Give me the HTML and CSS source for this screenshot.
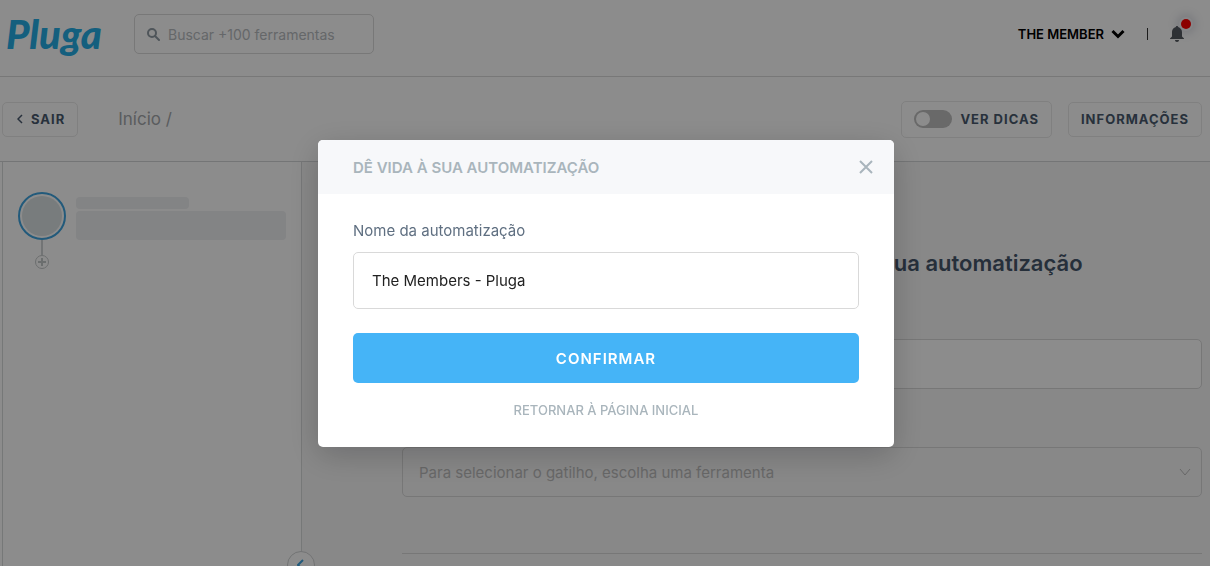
FILE: index.html
```html
<!DOCTYPE html>
<html lang="pt-BR">
<head>
    <meta charset="UTF-8">
    <meta name="viewport" content="width=device-width, initial-scale=1">
    <title>Pluga</title>
    <link rel="stylesheet" href="styles.css">
</head>
<body>
<header class="header">
    <a class="logo" href="#">Pluga</a>
    <label class="search">
        <svg width="13" height="13" viewBox="0 0 13 13" fill="none" stroke="currentColor" stroke-width="2">
            <circle cx="5" cy="5" r="4"/>
            <path d="M8 8l4 4" stroke-linecap="round"/>
        </svg>
        <input type="search" placeholder="Buscar +100 ferramentas" aria-label="Buscar ferramentas">
    </label>
    <div class="account">
        <button class="user" type="button">
            THE MEMBER
            <svg width="14" height="10" viewBox="0 0 14 10" fill="none" stroke="currentColor" stroke-width="3">
                <path d="M1.500 2L7 7.500 12.500 2"/>
            </svg>
        </button>
        <span class="divider"></span>
        <button class="bell" type="button" aria-label="Notificações">
            <svg width="14" height="16" viewBox="0 0 14 16" fill="currentColor">
                <path d="M7 0c.7 0 1.100.4 1.100 1C10.500 1.500 12 3.500 12 6v4.500l2 2V13H0v-.5l2-2V6c0-2.500 1.500-4.500 3.900-5C5.900.4 6.300 0 7 0z"/>
                <path d="M5 14h4c0 1.100-.8 2-2 2s-2-.9-2-2z"/>
            </svg>
            <span class="dot"></span>
        </button>
    </div>
</header>

<nav class="toolbar">
    <button class="btn" type="button">
        <svg width="6" height="10" viewBox="0 0 6 10" fill="none" stroke="currentColor" stroke-width="1.500">
            <path d="M5 1L1 5l4 4"/>
        </svg>
        SAIR
    </button>
    <a class="crumb" href="#">Início /</a>
    <div class="tools">
        <label class="btn tips">
            <input class="switch" type="checkbox" role="switch">
            VER DICAS
        </label>
        <button class="btn" type="button">INFORMAÇÕES</button>
    </div>
</nav>

<div class="workspace">
    <aside class="sidebar">
        <div class="step">
            <div class="avatar"></div>
            <div class="lines">
                <div class="line-short"></div>
                <div class="line-long"></div>
            </div>
        </div>
        <div class="add-step">
            <span class="stem"></span>
            <button class="add" type="button" aria-label="Adicionar etapa">
                <svg width="14" height="14" viewBox="0 0 14 14" fill="none" stroke="currentColor">
                    <circle cx="7" cy="7" r="6.500"/>
                    <path d="M7 3v8M3 7h8" stroke-width="2"/>
                </svg>
            </button>
        </div>
        <button class="collapse" type="button" aria-label="Recolher">
            <svg width="8" height="12" viewBox="0 0 8 12" fill="none" stroke="currentColor" stroke-width="2">
                <path d="M6 1L1 6l5 5"/>
            </svg>
        </button>
    </aside>
    <main class="content">
        <h1>Defina agora como vai começar a sua automatização</h1>
        <label class="label" for="tool">Ferramenta</label>
        <input class="field" id="tool" type="text">
        <label class="label" for="trigger">Gatilho</label>
        <div class="select">
            <select class="field" id="trigger">
                <option>Para selecionar o gatilho, escolha uma ferramenta</option>
            </select>
            <svg width="12" height="8" viewBox="0 0 12 8" fill="none" stroke="currentColor">
                <path d="M1 1l5 6 5-6"/>
            </svg>
        </div>
        <hr>
    </main>
</div>

<div class="overlay">
    <form class="modal" role="dialog" aria-labelledby="modal-title">
        <div class="modal-head">
            <h2 id="modal-title">DÊ VIDA À SUA AUTOMATIZAÇÃO</h2>
            <button class="close" type="button" aria-label="Fechar">
                <svg width="14" height="14" viewBox="0 0 14 14" fill="none" stroke="currentColor" stroke-width="2">
                    <path d="M1 1l12 12M13 1L1 13"/>
                </svg>
            </button>
        </div>
        <div class="modal-body">
            <label for="name">Nome da automatização</label>
            <input id="name" type="text" value="The Members - Pluga">
            <button class="confirm" type="button">CONFIRMAR</button>
            <a class="back" href="#">RETORNAR À PÁGINA INICIAL</a>
        </div>
    </form>
</div>
</body>
</html>
```
FILE: styles.css
```css
* {
    box-sizing: border-box;
}

body {
    margin: 0;
    height: 100vh;
    overflow: hidden;
    display: flex;
    flex-direction: column;
    background: #fff;
    color: #495a6e;
    font-family: Inter, "Liberation Sans", sans-serif;
    font-size: 15px;
}

button, input, select {
    font: inherit;
    color: inherit;
}

button {
    padding: 0;
    border: 0;
    background: none;
    cursor: pointer;
}

a {
    color: inherit;
    text-decoration: none;
}

svg {
    display: block;
    flex: none;
}

/* header */
.header {
    display: flex;
    align-items: center;
    flex: none;
    height: 77px;
    padding: 0 26px 8px 6px;
    border-bottom: 1px solid #dadada;
}

.logo {
    width: 128px;
    color: #26aee6;
    font-family: Lato, sans-serif;
    font-size: 40px;
    font-style: italic;
    font-weight: 900;
    line-height: 48px;
}

.search {
    display: flex;
    align-items: center;
    gap: 8px;
    width: 240px;
    height: 40px;
    padding: 0 12px;
    border: 1px solid #dadada;
    border-radius: 5px;
    color: #a9b5bc;
}

.search svg {
    color: #909ba4;
}

.search input {
    flex: 1;
    min-width: 0;
    padding: 0;
    border: 0;
    outline: 0;
    background: none;
    font-size: 14px;
}

.search input::placeholder {
    color: #b8bcbf;
}

.account {
    display: flex;
    align-items: center;
    margin-left: auto;
    color: #000;
}

.user {
    display: flex;
    align-items: center;
    gap: 7px;
    font-size: 13px;
    font-weight: 600;
}

.divider {
    width: 1px;
    height: 12px;
    margin: 0 22px;
    background: #333;
}

.bell {
    position: relative;
    color: #555a60;
}

.dot {
    position: absolute;
    top: -7px;
    right: -7px;
    width: 10px;
    height: 10px;
    border-radius: 50%;
    background: #ff0000;
    box-shadow: 0 0 0 2px #f4f4f8, 0 0 8px 5px rgba(90, 100, 130, .2);
}

/* toolbar */
.toolbar {
    display: flex;
    align-items: center;
    flex: none;
    height: 85px;
    padding: 0 8px 0 2px;
    border-bottom: 1px solid #d4d6d8;
}

.btn {
    display: flex;
    align-items: center;
    gap: 8px;
    height: 35px;
    padding: 0 12px;
    border: 1px solid #eaeaea;
    border-radius: 5px;
    font-size: 13px;
    font-weight: 700;
    letter-spacing: 1px;
}

.toolbar > .btn {
    padding: 0 12px 0 14px;
}

.crumb {
    margin-left: 40px;
    color: #a4a8ac;
    font-size: 17px;
}

.tools {
    display: flex;
    align-items: center;
    gap: 16px;
    margin-left: auto;
}

.tips {
    height: 37px;
}

.switch {
    appearance: none;
    display: flex;
    width: 38px;
    height: 18px;
    margin: 0;
    padding: 2px;
    border-radius: 9px;
    background: #bfbfbf;
}

.switch::before {
    content: "";
    width: 14px;
    height: 14px;
    border-radius: 50%;
    background: #fff;
}

.switch:checked {
    justify-content: flex-end;
}

/* workspace */
.workspace {
    display: flex;
    flex: 1;
    margin-left: 2px;
}

.sidebar {
    position: relative;
    width: 300px;
    flex: none;
    padding: 30px 15px;
    border: solid #d8dadb;
    border-width: 0 1px;
}

.step {
    display: flex;
    gap: 10px;
}

.avatar {
    width: 48px;
    height: 48px;
    flex: none;
    padding: 2px;
    border: 2px solid #3fa5e0;
    border-radius: 50%;
    background: #dbe2e3 content-box;
}

.lines {
    flex: 1;
    padding-top: 5px;
}

.line-short, .line-long {
    border-radius: 4px;
    background: #eff0f3;
}

.line-short {
    width: 54%;
    height: 12px;
}

.line-long {
    height: 29px;
    margin-top: 2px;
}

.add-step {
    display: flex;
    flex-direction: column;
    align-items: center;
    width: 48px;
    color: #c4c8c9;
}

.stem {
    width: 2px;
    height: 15px;
    background: #d0d4d5;
}

.collapse {
    position: absolute;
    right: -14px;
    bottom: -13px;
    display: flex;
    align-items: center;
    justify-content: center;
    width: 28px;
    height: 28px;
    border: 1px solid #d0d2d3;
    border-radius: 50%;
    background: #fff;
    color: #3fa5e0;
}

.content {
    flex: 1;
    padding: 86px 8px 0 100px;
    background: #f7f7f8;
}

.content h1 {
    margin: 0 0 44px;
    color: #45566b;
    font-size: 22px;
    font-weight: 600;
    line-height: 30px;
    text-align: center;
}

.label {
    display: block;
    height: 17px;
    font-size: 14px;
    line-height: 17px;
}

.field {
    display: block;
    width: 100%;
    height: 50px;
    padding: 0 16px;
    border: 1px solid #d9d9d9;
    border-radius: 5px;
    background: #fff;
}

.field + .label {
    margin-top: 41px;
}

.select {
    display: grid;
    align-items: center;
}

.select .field, .select svg {
    grid-area: 1 / 1;
}

.select .field {
    appearance: none;
    background: none;
    color: #bdbdbd;
}

.select svg {
    justify-self: end;
    margin-right: 11px;
    color: #bdbdbd;
    pointer-events: none;
}

hr {
    margin: 56px 0 0;
    border: 0;
    border-top: 1px solid #d9d9d9;
}

/* modal */
.overlay {
    position: fixed;
    inset: 0;
    display: flex;
    align-items: flex-start;
    justify-content: center;
    padding: 140px 0 0 2px;
    background: rgba(0, 0, 0, .45);
}

.modal {
    width: 576px;
    overflow: hidden;
    border-radius: 5px;
    background: #fff;
    box-shadow: 0 8px 32px rgba(0, 0, 0, .2);
}

.modal-head {
    display: flex;
    align-items: center;
    justify-content: space-between;
    height: 54px;
    padding: 0 21px 0 35px;
    background: #f7f8fa;
    color: #a9b5bc;
}

.modal-head h2 {
    margin: 0;
    font-size: 15px;
    font-weight: 600;
}

.modal-body {
    display: flex;
    flex-direction: column;
    padding: 27px 35px 28px;
}

.modal-body label {
    margin-bottom: 11px;
    color: #5f6f81;
    line-height: 20px;
}

.modal-body input {
    height: 57px;
    padding: 0 18px;
    border: 1px solid #d9d9d9;
    border-radius: 5px;
    color: #222;
}

.confirm {
    height: 50px;
    margin: 24px 0 18px;
    border-radius: 5px;
    background: #45b4f7;
    color: #fff;
    font-weight: 600;
    letter-spacing: 1px;
}

.back {
    color: #a9b5bc;
    font-size: 13px;
    font-weight: 500;
    line-height: 18px;
    text-align: center;
}
```
